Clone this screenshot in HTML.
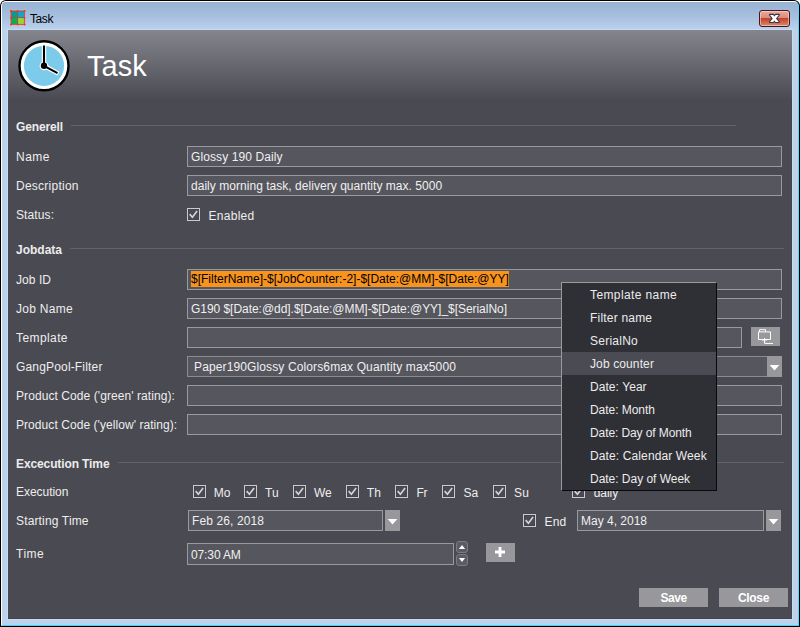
<!DOCTYPE html>
<html>
<head>
<meta charset="utf-8">
<title>Task</title>
<style>
html,body{margin:0;padding:0;background:#fff;}
body{width:800px;height:627px;overflow:hidden;position:relative;font-family:"Liberation Sans",sans-serif;font-size:12px;color:#e8e8e8;}
*{box-sizing:border-box;}
.abs{position:absolute;}
#win{position:absolute;left:0;top:0;width:800px;height:627px;border-radius:6px 6px 0 0;background:#000;overflow:hidden;}
#frame{position:absolute;left:1px;top:1px;width:798px;height:625px;border-radius:5px 5px 0 0;border:1px solid #fff;border-right-color:#4dd8ff;border-bottom-color:#3fd6fb;background:linear-gradient(to bottom,#98b3d3 0,#a4bedc 13px,#b0c8e4 21px,#bad1eb 27px,#bdd3ec 29px,#bdd3ec 100%);}
#client{position:absolute;left:8px;top:30px;width:784px;height:589px;background:#4a4a52;overflow:hidden;box-shadow:inset -1px -1px 0 #45454c;}
#cliento{position:absolute;left:7px;top:29px;width:786px;height:591px;background:#c6dcf5;}
#hdr{position:absolute;left:0;top:0;width:784px;height:70px;background:linear-gradient(to bottom,#85858e 0,#4a4a52 100%);}
.lbl{position:absolute;left:8px;height:14px;line-height:14px;white-space:nowrap;color:#eeeeee;}
.sec{position:absolute;left:8px;height:14px;line-height:14px;font-weight:bold;white-space:nowrap;color:#ececec;}
.hr{position:absolute;height:1px;background:#63636b;}
.fld{position:absolute;height:21px;border:1px solid #9a9a9d;background:#56565e;line-height:21px;padding-left:3px;white-space:nowrap;color:#f0f0f0;overflow:hidden;}
.cb{position:absolute;width:13px;height:13px;border:1px solid #cbcbcf;background:#4a4a52;box-shadow:inset 0 0 0 1px #45454d;}
.cbt{position:absolute;height:14px;line-height:14px;white-space:nowrap;color:#eeeeee;}
.btn{position:absolute;background:#97979c;color:#fff;font-weight:bold;text-align:center;}
.sel{background:#f8931d;color:#000;display:inline-block;height:16px;line-height:17px;margin-top:1px;vertical-align:top;}
.hi{background:#4b4b53;}
.spin{width:12px;height:12px;border:1px solid #7c7c82;border-radius:3px;background:#5c5c64;overflow:hidden}
#pop{position:absolute;width:156px;height:209px;background:#2f3036;border:1px solid #09090b;border-left-color:#9a9a9e;border-top-color:#9a9a9e;}
.mi{position:absolute;left:0;width:154px;height:23px;line-height:25px;padding-left:28px;color:#ececec;white-space:nowrap;}
</style>
</head>
<body>
<div id="win">
  <div id="frame"></div>
  <div id="cliento"></div>
  <div id="title" class="abs" style="left:30px;top:11px;height:16px;line-height:16px;color:#000;font-size:12px;letter-spacing:-0.4px;">Task</div>
  <svg class="abs" style="left:10px;top:10px" width="16" height="16" viewBox="0 0 16 16">
    <rect x="1" y="1" width="13.6" height="13.6" fill="#9a5a44"/>
    <rect x="1.7" y="1.7" width="5.5" height="5.5" fill="#0a9a94"/>
    <rect x="8.1" y="1.7" width="5.8" height="5.5" fill="#0fa6d0"/>
    <rect x="1.7" y="8.1" width="5.5" height="5.8" fill="#0ab04e"/>
    <rect x="8.1" y="8.1" width="5.8" height="5.8" fill="#a8d030"/>
    <path d="M0.8 0.8H14.6V14.6H0.8Z" fill="none" stroke="#ee3a2a" stroke-opacity=".6" stroke-width="1"/>
    <g fill="#f22c1c"><circle cx="0.9" cy="0.9" r=".9"/><circle cx="7.7" cy="0.8" r=".8"/><circle cx="14.6" cy="0.9" r=".9"/><circle cx="0.8" cy="7.7" r=".8"/><circle cx="14.6" cy="7.7" r=".8"/><circle cx="0.9" cy="14.6" r=".9"/><circle cx="7.7" cy="14.6" r=".8"/><circle cx="14.6" cy="14.6" r=".9"/></g>
  </svg>
  <div id="xbtn" class="abs" style="left:759px;top:10px;width:31px;height:17px;border:1px solid #46161f;border-radius:3px;background:linear-gradient(to bottom,#e8aa9e 0,#dc8a78 47%,#c2432a 50%,#d98a72 100%);box-shadow:inset 0 0 0 1px rgba(255,225,215,.55);">
    <svg width="29" height="15" viewBox="0 0 29 15" style="display:block"><g stroke="#35354a" stroke-width="2.2" stroke-linejoin="round" fill="none"><path d="M10 3.9H13.2L18.8 10.9H15.6Z"/><path d="M18.8 3.9H15.6L10 10.9H13.2Z"/></g><g fill="#fff"><path d="M10 3.9H13.2L18.8 10.9H15.6Z"/><path d="M18.8 3.9H15.6L10 10.9H13.2Z"/></g></svg>
  </div>
  <div id="client">
    <div id="hdr"></div>
    <svg class="abs" style="left:10px;top:10px" width="52" height="52" viewBox="0 0 52 52">
      <circle cx="26" cy="25.8" r="24.5" fill="#fff" stroke="#000" stroke-width="2.4"/>
      <circle cx="26" cy="25.8" r="20.1" fill="#7ccbeb"/>
      <path d="M26 25.8V4.6M26 25.8L40.4 33.6" stroke="#fff" stroke-width="4.4" fill="none"/>
      <circle cx="26" cy="25.8" r="4.4" fill="#fff"/>
      <path d="M26 25.8V5.6M26 25.8L39.5 33.1" stroke="#000" stroke-width="2.1" fill="none"/>
      <circle cx="26" cy="25.8" r="3.2" fill="#000"/>
    </svg>
    <div class="abs" style="left:79px;top:20px;font-size:29px;line-height:32px;color:#fff;">Task</div>
<div class="sec" style="top:89.5px;letter-spacing:-0.146px">Generell</div><div class="hr" style="left:63px;top:95px;width:665px"></div>
<div class="lbl" style="top:120px;letter-spacing:0.465px">Name</div>
<div class="fld" style="top:116px;left:179px;width:595px;letter-spacing:0.1px;">Glossy 190 Daily</div>
<div class="lbl" style="top:149px;letter-spacing:0.245px">Description</div>
<div class="fld" style="top:145px;left:179px;width:595px;letter-spacing:0.037px;">daily morning task, delivery quantity max. 5000</div>
<div class="lbl" style="top:178px;letter-spacing:0.116px">Status:</div>
<div class="cb" style="left:179px;top:178px"><svg width="11" height="11" viewBox="0 0 11 11" style="display:block"><path d="M1.7 5.1L4.4 8.2L9.1 1.9" fill="none" stroke="#d6d6da" stroke-width="1.6"/></svg></div><div class="cbt" style="left:200.5px;top:179px;letter-spacing:0.28px">Enabled</div>
<div class="sec" style="top:212.5px;letter-spacing:-0.001px">Jobdata</div><div class="hr" style="left:62px;top:218px;width:714px"></div>
<div class="lbl" style="top:243px;letter-spacing:0.053px">Job ID</div>
<div class="fld" style="top:239px;left:179px;width:595px;"><span class="sel">$[FilterName]-$[JobCounter:-2]-$[Date:@MM]-$[Date:@YY]</span></div>
<div class="lbl" style="top:272px;letter-spacing:0.271px">Job Name</div>
<div class="fld" style="top:268px;left:179px;width:595px;letter-spacing:-0.04px;">G190 $[Date:@dd].$[Date:@MM]-$[Date:@YY]_$[SerialNo]</div>
<div class="lbl" style="top:301px;letter-spacing:0.408px">Template</div>
<div class="fld" style="top:297px;left:179px;width:555px;"></div>
<div class="abs" id="browse" style="left:743px;top:297px;width:29px;height:19px;background:#97979c"><svg width="29" height="19" viewBox="0 0 29 19" style="display:block"><path d="M7.5 4.9H19.5V12.5H7.5ZM8.5 4.9V2.7H14.5V4.9M13.5 11V16.4H22" fill="none" stroke="#fff" stroke-width="1"/><path d="M11 13.3H16" fill="none" stroke="#fff" stroke-opacity=".7" stroke-width=".9"/></svg></div>
<div class="lbl" style="top:330px;letter-spacing:0.167px">GangPool-Filter</div>
<div class="fld" style="top:326px;left:179px;width:581px;letter-spacing:0.124px;padding-left:6px;border-color:#8b8b90;">Paper190Glossy Colors6max Quantity max5000</div>
<div class="abs" style="left:759px;top:326px;width:15px;height:21px;background:#97979c"><svg width="15" height="21" viewBox="0 0 15 21" style="display:block"><path d="M2.7 9H12.3L7.5 14.4Z" fill="#fff"/></svg></div>
<div class="lbl" style="top:359px;letter-spacing:0.078px">Product Code ('green' rating):</div>
<div class="fld" style="top:355px;left:179px;width:595px;"></div>
<div class="lbl" style="top:388px;letter-spacing:0.062px">Product Code ('yellow' rating):</div>
<div class="fld" style="top:384px;left:179px;width:595px;"></div>
<div class="sec" style="top:426.5px;letter-spacing:-0.113px">Excecution Time</div><div class="hr" style="left:110px;top:432px;width:666px"></div>
<div class="lbl" style="top:455px;letter-spacing:-0.043px">Execution</div>
<div class="cb" style="left:185px;top:455px"><svg width="11" height="11" viewBox="0 0 11 11" style="display:block"><path d="M1.7 5.1L4.4 8.2L9.1 1.9" fill="none" stroke="#d6d6da" stroke-width="1.6"/></svg></div><div class="cbt" style="left:205.8px;top:456px;letter-spacing:0px">Mo</div>
<div class="cb" style="left:236px;top:455px"><svg width="11" height="11" viewBox="0 0 11 11" style="display:block"><path d="M1.7 5.1L4.4 8.2L9.1 1.9" fill="none" stroke="#d6d6da" stroke-width="1.6"/></svg></div><div class="cbt" style="left:257px;top:456px;letter-spacing:-0.002px">Tu</div>
<div class="cb" style="left:285px;top:455px"><svg width="11" height="11" viewBox="0 0 11 11" style="display:block"><path d="M1.7 5.1L4.4 8.2L9.1 1.9" fill="none" stroke="#d6d6da" stroke-width="1.6"/></svg></div><div class="cbt" style="left:306px;top:456px;letter-spacing:0.0px">We</div>
<div class="cb" style="left:338px;top:455px"><svg width="11" height="11" viewBox="0 0 11 11" style="display:block"><path d="M1.7 5.1L4.4 8.2L9.1 1.9" fill="none" stroke="#d6d6da" stroke-width="1.6"/></svg></div><div class="cbt" style="left:358.8px;top:456px;letter-spacing:0px">Th</div>
<div class="cb" style="left:387px;top:455px"><svg width="11" height="11" viewBox="0 0 11 11" style="display:block"><path d="M1.7 5.1L4.4 8.2L9.1 1.9" fill="none" stroke="#d6d6da" stroke-width="1.6"/></svg></div><div class="cbt" style="left:408.4px;top:456px;letter-spacing:-0.163px">Fr</div>
<div class="cb" style="left:434px;top:455px"><svg width="11" height="11" viewBox="0 0 11 11" style="display:block"><path d="M1.7 5.1L4.4 8.2L9.1 1.9" fill="none" stroke="#d6d6da" stroke-width="1.6"/></svg></div><div class="cbt" style="left:455.4px;top:456px;letter-spacing:0.161px">Sa</div>
<div class="cb" style="left:485px;top:455px"><svg width="11" height="11" viewBox="0 0 11 11" style="display:block"><path d="M1.7 5.1L4.4 8.2L9.1 1.9" fill="none" stroke="#d6d6da" stroke-width="1.6"/></svg></div><div class="cbt" style="left:506px;top:456px;letter-spacing:0.161px">Su</div>
<div class="cb" style="left:564px;top:455px"><svg width="11" height="11" viewBox="0 0 11 11" style="display:block"><path d="M1.7 5.1L4.4 8.2L9.1 1.9" fill="none" stroke="#d6d6da" stroke-width="1.6"/></svg></div><div class="cbt" style="left:585.75px;top:456px;letter-spacing:-0.061px">daily</div>
<div class="lbl" style="top:484px;letter-spacing:0.154px">Starting Time</div>
<div class="fld" style="top:480px;left:180px;width:195px;letter-spacing:0.106px;">Feb 26, 2018</div>
<div class="abs" style="left:377px;top:480px;width:15px;height:21px;background:#97979c"><svg width="15" height="21" viewBox="0 0 15 21" style="display:block"><path d="M2.7 9H12.3L7.5 14.4Z" fill="#fff"/></svg></div>
<div class="cb" style="left:515px;top:484px"><svg width="11" height="11" viewBox="0 0 11 11" style="display:block"><path d="M1.7 5.1L4.4 8.2L9.1 1.9" fill="none" stroke="#d6d6da" stroke-width="1.6"/></svg></div><div class="cbt" style="left:536.5px;top:485px;letter-spacing:0.216px">End</div>
<div class="fld" style="top:480px;left:569px;width:187px;">May 4, 2018</div>
<div class="abs" style="left:758px;top:480px;width:15px;height:21px;background:#97979c"><svg width="15" height="21" viewBox="0 0 15 21" style="display:block"><path d="M2.7 9H12.3L7.5 14.4Z" fill="#fff"/></svg></div>
<div class="lbl" style="top:517px;letter-spacing:0.5px">Time</div>
<div class="fld" style="top:513px;left:179px;width:267px;height:22px;line-height:22px;letter-spacing:-0.12px;">07:30 AM</div>
<div class="abs spin" style="left:448px;top:511px"><svg width="10" height="10" viewBox="0 0 10 10" style="display:block"><path d="M1.9 7H8.1L5 3Z" fill="#fff"/></svg></div><div class="abs spin" style="left:448px;top:524px"><svg width="10" height="10" viewBox="0 0 10 10" style="display:block"><path d="M1.9 3H8.1L5 7Z" fill="#fff"/></svg></div>
<div class="abs" style="left:478px;top:513px;width:29px;height:19px;background:#97979c"><svg width="29" height="19" viewBox="0 0 29 19" style="display:block"><path d="M9 7.6H19V10.4H9ZM12.6 4H15.4V14H12.6Z" fill="#fff"/></svg></div>
<div class="btn" style="left:631px;top:558px;width:69px;height:19px;line-height:21px;letter-spacing:-0.45px">Save</div><div class="btn" style="left:711px;top:558px;width:69px;height:19px;line-height:21px;letter-spacing:-0.3px">Close</div>
<div id="pop" style="left:553px;top:252px"><div class="mi" style="top:0px;letter-spacing:0.392px">Template name</div><div class="mi" style="top:23px;letter-spacing:0.199px">Filter name</div><div class="mi" style="top:46px;letter-spacing:0.248px">SerialNo</div><div class="mi hi" style="top:69px;letter-spacing:0.118px">Job counter</div><div class="mi" style="top:92px;letter-spacing:0.064px">Date: Year</div><div class="mi" style="top:115px;letter-spacing:-0.052px">Date: Month</div><div class="mi" style="top:138px;letter-spacing:-0.098px">Date: Day of Month</div><div class="mi" style="top:161px;letter-spacing:0.12px">Date: Calendar Week</div><div class="mi" style="top:184px;letter-spacing:-0.027px">Date: Day of Week</div></div>

  </div>
</div>
</body>
</html>
